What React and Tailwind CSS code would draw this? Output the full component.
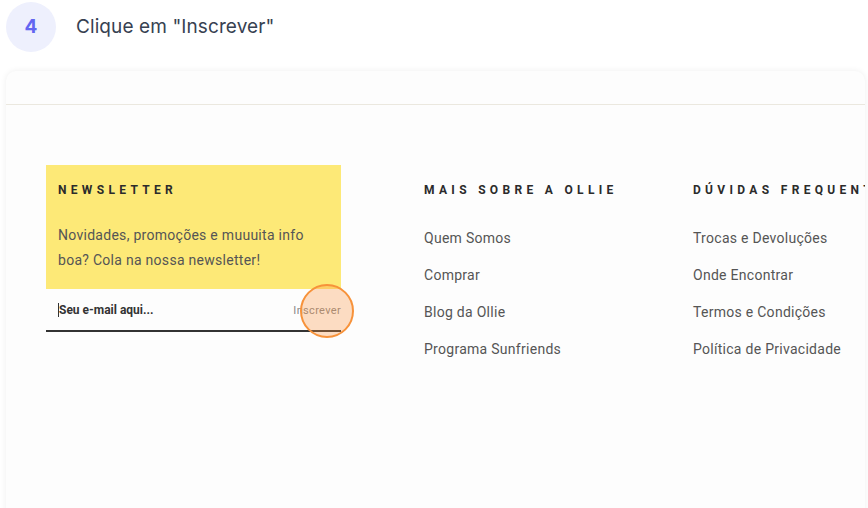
const linksOllie = ['Quem Somos', 'Comprar', 'Blog da Ollie', 'Programa Sunfriends'];
const linksDuvidas = ['Trocas e Devoluções', 'Onde Encontrar', 'Termos e Condições', 'Política de Privacidade'];

function FooterColumn({ title, links }) {
    return (
        <div className="flex flex-col shrink-0">
            <h3 className="text-[12px] font-bold tracking-[0.36em] text-[#2b2b2b] leading-[16px] mt-[17px] whitespace-nowrap">
                {title}
            </h3>
            <ul className="mt-[32px] flex flex-col gap-[20px]">
                {links.map((link) => (
                    <li key={link} className="text-[14px] leading-[17px] tracking-[0.02em] text-[#555] whitespace-nowrap">
                        {link}
                    </li>
                ))}
            </ul>
        </div>
    );
}

export default function App() {
    return (
        <div className="w-[868px] h-[508px] bg-white overflow-hidden font-['Roboto',sans-serif]">
            {/* Step header */}
            <div className="flex items-center pl-[6px] pt-[2px]">
                <div className="w-[50px] h-[50px] rounded-full bg-[#eef0fd] flex items-center justify-center">
                    <span className="font-['Inter',sans-serif] font-bold text-[19px] text-[#6366f1]">4</span>
                </div>
                <span className="ml-[20px] font-['Inter',sans-serif] text-[19px] tracking-[0.005em] text-[#374151]">Clique em "Inscrever"</span>
            </div>

            {/* Footer card */}
            <div className="ml-[6px] mt-[19px] w-[859px] h-[480px] overflow-hidden rounded-t-[10px] bg-[#fdfdfd] shadow-[0_0_6px_rgba(0,0,0,0.07)]">
                <div className="h-[34px] border-b border-[#ebe8df]" />
                <div className="flex pl-[40px] pt-[60px]">
                    <div className="w-[295px] shrink-0 flex flex-col">
                        <div className="bg-[#fde977] px-[12px] pt-[17px] pb-[16px]">
                            <h3 className="text-[12px] font-bold tracking-[0.36em] text-[#2b2b2b] leading-[16px]">NEWSLETTER</h3>
                            <p className="mt-[25px] text-[14px] leading-[25px] tracking-[0.02em] text-[#555] pr-[8px]">
                                Novidades, promoções e muuuita info boa? Cola na nossa newsletter!
                            </p>
                        </div>
                        <div className="relative flex items-center justify-between h-[43px] border-b-2 border-[#333] pl-[12px]">
                            <span className="text-[12px] font-bold text-[#333] border-l border-[#333] leading-[14px]">Seu e-mail aqui...</span>
                            <span className="text-[11px] tracking-[0.03em] text-[#888] mt-[3px]">Inscrever</span>
                            <div className="absolute right-[-13px] top-[-5px] w-[54px] h-[54px] rounded-full border-2 border-[#f7923a] bg-[#fb923c]/30" />
                        </div>
                    </div>
                    <div className="ml-[83px] w-[269px] shrink-0">
                        <FooterColumn title="MAIS SOBRE A OLLIE" links={linksOllie} />
                    </div>
                    <FooterColumn title="DÚVIDAS FREQUENTES" links={linksDuvidas} />
                </div>
            </div>
        </div>
    );
}
